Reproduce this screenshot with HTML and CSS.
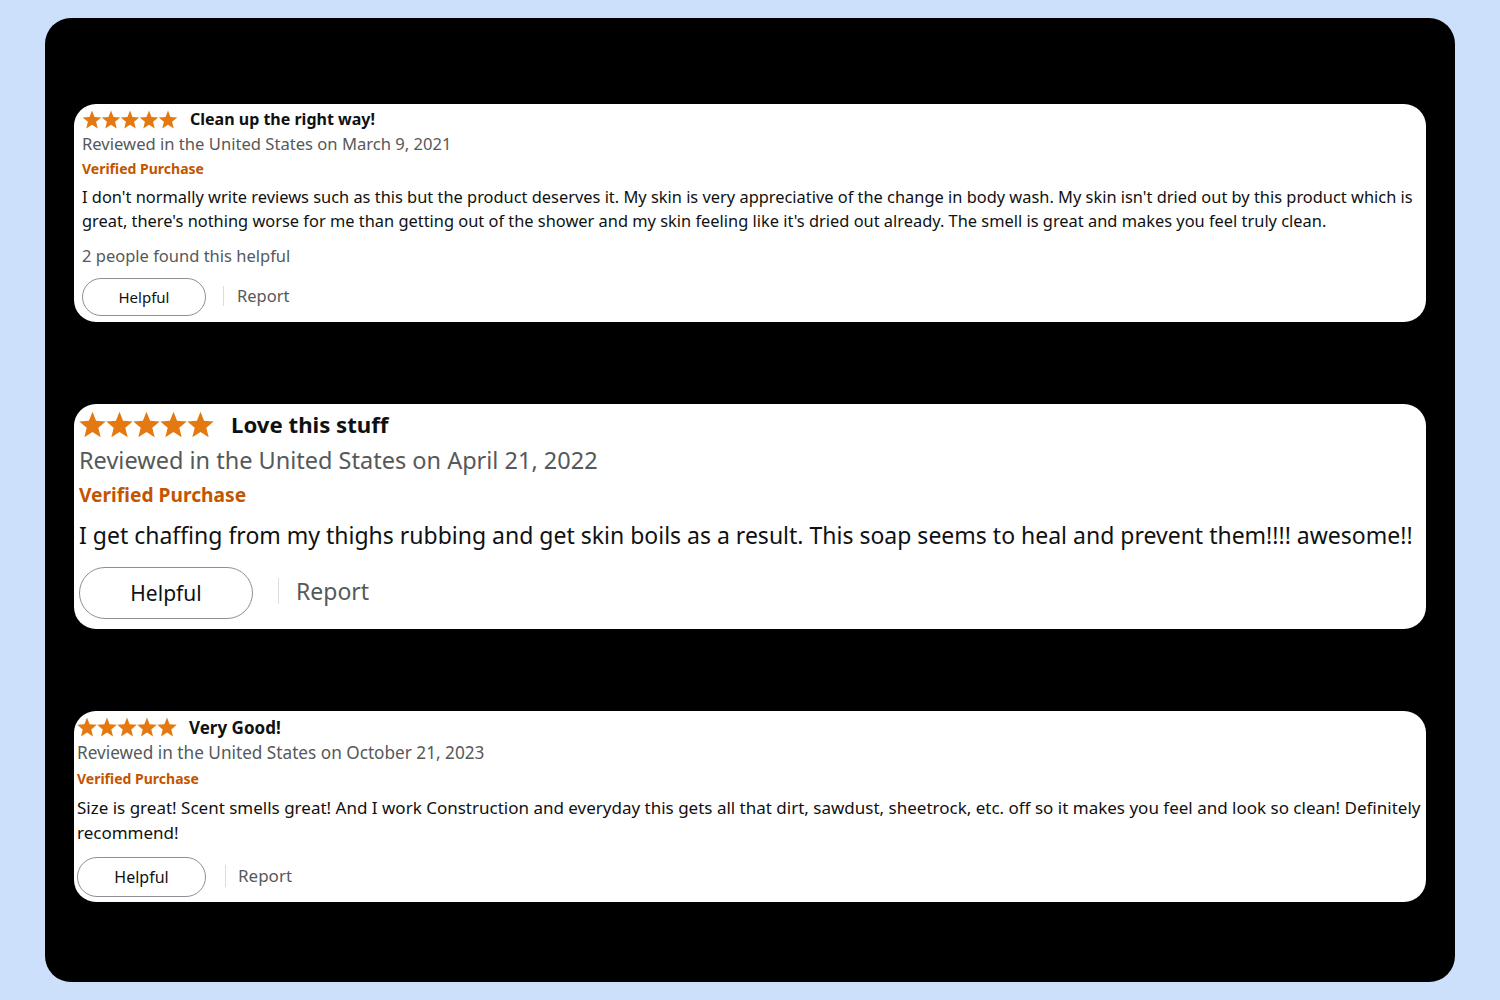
FILE: index.html
```html
<!DOCTYPE html>
<html>
<head>
  <meta charset="utf-8">
  <link rel="stylesheet" href="styles.css">
</head>
<body>
  <svg width="0" height="0" style="position:absolute">
    <symbol id="star" viewBox="0 0 20 20">
      <path d="M10 0.6 L12.65 7.3 L19.8 7.8 L14.3 12.4 L16.05 19.4 L10 15.55 L3.95 19.4 L5.7 12.4 L0.2 7.8 L7.35 7.3 Z" fill="#e47911"/>
    </symbol>
  </svg>

  <div class="panel">

    <div class="review small">
      <div class="review-head">
        <svg class="stars" viewBox="0 0 100 20">
          <use href="#star" x="0" width="20" height="20"/><use href="#star" x="20" width="20" height="20"/><use href="#star" x="40" width="20" height="20"/><use href="#star" x="60" width="20" height="20"/><use href="#star" x="80" width="20" height="20"/>
        </svg>
        <span class="review-title">Clean up the right way!</span>
      </div>
      <div class="review-date">Reviewed in the United States on March 9, 2021</div>
      <div class="verified">Verified Purchase</div>
      <div class="review-body">I don't normally write reviews such as this but the product deserves it. My skin is very appreciative of the change in body wash. My skin isn't dried out by this product which is great, there's nothing worse for me than getting out of the shower and my skin feeling like it's dried out already. The smell is great and makes you feel truly clean.</div>
      <div class="helpful-count">2 people found this helpful</div>
      <div class="actions">
        <button class="helpful-btn">Helpful</button>
        <span class="report">Report</span>
      </div>
    </div>

    <div class="review large">
      <div class="review-head">
        <svg class="stars" viewBox="0 0 100 20">
          <use href="#star" x="0" width="20" height="20"/><use href="#star" x="20" width="20" height="20"/><use href="#star" x="40" width="20" height="20"/><use href="#star" x="60" width="20" height="20"/><use href="#star" x="80" width="20" height="20"/>
        </svg>
        <span class="review-title">Love this stuff</span>
      </div>
      <div class="review-date">Reviewed in the United States on April 21, 2022</div>
      <div class="verified">Verified Purchase</div>
      <div class="review-body">I get chaffing from my thighs rubbing and get skin boils as a result. This soap seems to heal and prevent them!!!! awesome!!</div>
      <div class="actions">
        <button class="helpful-btn">Helpful</button>
        <span class="report">Report</span>
      </div>
    </div>

    <div class="review medium">
      <div class="review-head">
        <svg class="stars" viewBox="0 0 100 20">
          <use href="#star" x="0" width="20" height="20"/><use href="#star" x="20" width="20" height="20"/><use href="#star" x="40" width="20" height="20"/><use href="#star" x="60" width="20" height="20"/><use href="#star" x="80" width="20" height="20"/>
        </svg>
        <span class="review-title">Very Good!</span>
      </div>
      <div class="review-date">Reviewed in the United States on October 21, 2023</div>
      <div class="verified">Verified Purchase</div>
      <div class="review-body">Size is great! Scent smells great! And I work Construction and everyday this gets all that dirt, sawdust, sheetrock, etc. off so it makes you feel and look so clean! Definitely recommend!</div>
      <div class="actions">
        <button class="helpful-btn">Helpful</button>
        <span class="report">Report</span>
      </div>
    </div>

  </div>
</body>
</html>
```

FILE: styles.css
```css
body {
  margin: 0;
  padding: 18px 45px;
  background-color: #cce0fb;
  font-family: "Noto Sans", "Open Sans", sans-serif;
  color: #0f1111;
}
.panel {
  height: 964px;
  box-sizing: border-box;
  background-color: #000;
  border-radius: 26px;
  padding: 86px 29px 0 29px;
  display: flex;
  flex-direction: column;
  gap: 82px;
}
.review {
  background-color: #fff;
  border-radius: 22px;
}
.review-head {
  display: flex;
  align-items: center;
}
.review-title {
  font-weight: bold;
}
.review-date,
.helpful-count,
.report {
  color: #565959;
}
.verified {
  color: #c45500;
  font-weight: bold;
}
.actions {
  display: flex;
  align-items: center;
}
.helpful-btn {
  font-family: inherit;
  color: #0f1111;
  background-color: #fff;
  border: 1px solid #8d9096;
  border-radius: 100px;
  padding: 0;
  box-sizing: border-box;
}
.report {
  border-left: 1px solid #ddd;
}

/* first card */
.small {
  padding: 4px 8px 6px 8px;
}
.small .review-head {
  height: 22px;
}
.small .stars {
  width: 96px;
  height: 19px;
  margin-right: 12px;
}
.small .review-title {
  font-size: 16px;
}
.small .review-date {
  font-size: 16.6px;
  line-height: 24px;
  margin-top: 2px;
}
.small .verified {
  font-size: 14px;
  line-height: 22px;
  margin-top: 2px;
}
.small .review-body {
  font-size: 16.4px;
  line-height: 24px;
  margin-top: 5px;
}
.small .helpful-count {
  font-size: 16.5px;
  line-height: 24px;
  margin-top: 11px;
}
.small .actions {
  margin-top: 10px;
}
.small .helpful-btn {
  width: 124px;
  height: 38px;
  font-size: 15px;
}
.small .report {
  margin-left: 17px;
  padding-left: 13px;
  font-size: 16.5px;
  line-height: 20px;
  margin-bottom: 2px;
}

/* second card */
.large {
  padding: 5px 5px 10px 5px;
}
.large .review-head {
  height: 30px;
}
.large .stars {
  width: 135px;
  height: 27px;
  margin-right: 17px;
}
.large .review-title {
  font-size: 22.2px;
}
.large .review-date {
  font-size: 23.5px;
  line-height: 30px;
  margin-top: 6px;
}
.large .verified {
  font-size: 19.2px;
  line-height: 28px;
  margin-top: 6px;
}
.large .review-body {
  font-size: 23px;
  line-height: 32px;
  margin-top: 10px;
}
.large .actions {
  margin-top: 16px;
}
.large .helpful-btn {
  width: 174px;
  height: 52px;
  font-size: 21px;
}
.large .report {
  margin-left: 25px;
  padding-left: 17px;
  font-size: 23px;
  line-height: 26px;
  margin-bottom: 4px;
}

/* third card */
.medium {
  padding: 4px 3px 5px 3px;
}
.medium .review-head {
  height: 24px;
}
.medium .stars {
  width: 100px;
  height: 20px;
  margin-right: 12px;
}
.medium .review-title {
  font-size: 17px;
}
.medium .review-date {
  font-size: 17.2px;
  line-height: 24px;
  margin-top: 2px;
}
.medium .verified {
  font-size: 14px;
  line-height: 22px;
  margin-top: 3px;
}
.medium .review-body {
  font-size: 17px;
  line-height: 25px;
  margin-top: 5px;
}
.medium .actions {
  margin-top: 12px;
}
.medium .helpful-btn {
  width: 129px;
  height: 40px;
  font-size: 16px;
}
.medium .report {
  margin-left: 19px;
  padding-left: 12px;
  font-size: 17px;
  line-height: 22px;
  margin-bottom: 2px;
}
```
